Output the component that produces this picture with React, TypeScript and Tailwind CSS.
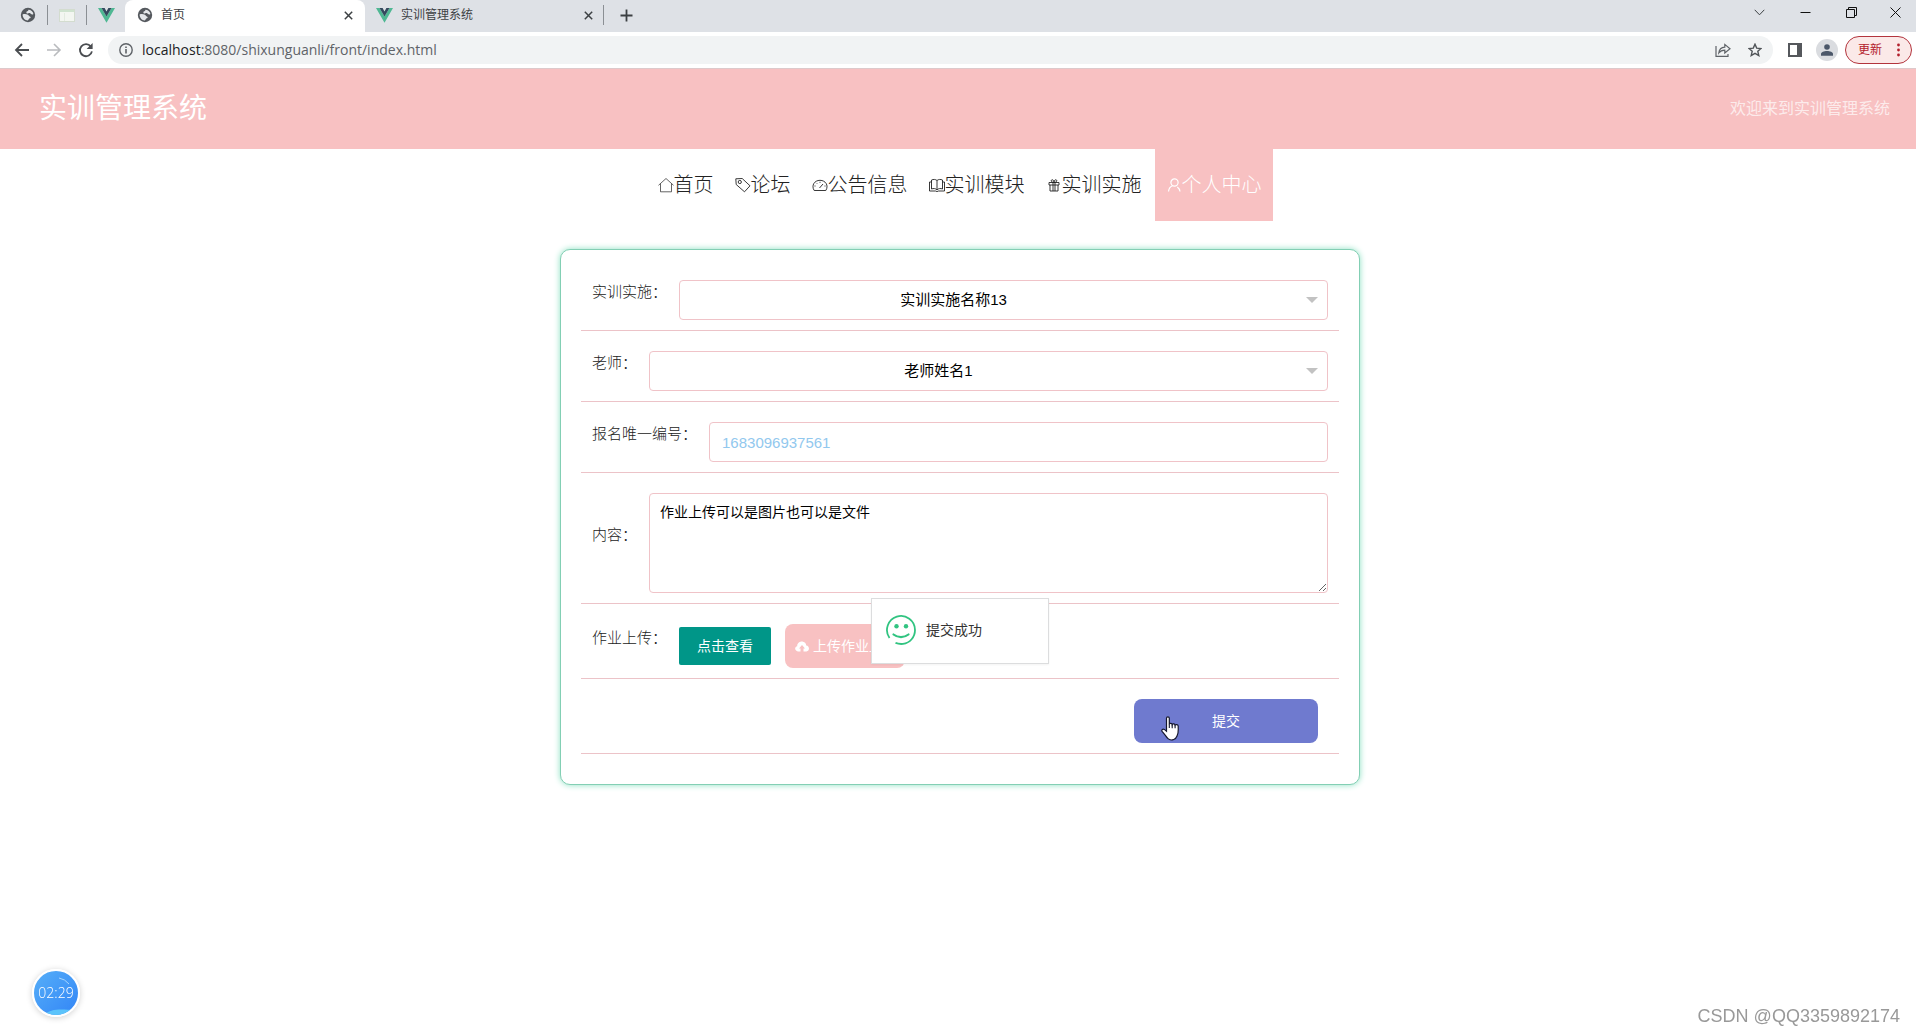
import React from "react";

const cjk = "font-['Liberation_Sans','Noto_Sans_CJK_SC',sans-serif]";

function Globe() {
  return (
    <svg width="16" height="16" viewBox="0 0 16 16" aria-hidden="true">
      <circle cx="8" cy="8" r="7.200" fill="#55595e" />
      <path d="M8.300 2.700c2.600 0 4.700 1.800 5.100 4.200-1 .9-2.400.6-3-.3-.5-.8-1.600-.5-2.300-.2-.9.4-1.900-.2-1.700-1.200.2-1 1.600-.8 1.800-1.400z" fill="#e4e7ea" />
      <path d="M2.600 7.400c1.700-.6 3.700-.5 5.300.3 1 .5 1 1.500 2 1.700 1.200.3.900 1.600-.1 1.900-.9.3-1.100 1.400-1.900 2.100-3-.1-5.300-2.800-5.300-6z" fill="#e4e7ea" />
    </svg>
  );
}

function Vue() {
  return (
    <svg width="17" height="15" viewBox="0 0 17 15" aria-hidden="true">
      <path d="M0 0h3.500l5 8.600 5-8.600H17L8.500 14.700z" fill="#4fb893" />
      <path d="M3.500 0h3.100l1.900 3.400L10.400 0h3.100l-5 8.600z" fill="#34495e" />
    </svg>
  );
}

function Cross() {
  return (
    <svg width="9" height="9" viewBox="0 0 9 9" aria-hidden="true">
      <path d="M.8.8l7.400 7.400M8.200.8L.8 8.200" stroke="#3c4043" strokeWidth="1.500" />
    </svg>
  );
}

function Divider() {
  return <span className="h-5 w-px bg-[#8b8f94]" />;
}

function TabStrip() {
  return (
    <div className="flex h-8 bg-[#dee1e6] text-xs text-[#3c4043]">
      <div className="flex h-[30px] items-center">
        <button aria-label="标签页 1" className="flex w-[47px] justify-center pl-2"><Globe /></button>
        <Divider />
        <button aria-label="标签页 2" className="flex w-[38px] justify-center">
          <svg width="16" height="13" viewBox="0 0 16 13" aria-hidden="true">
            <rect x=".5" y=".5" width="15" height="12" fill="#f3f6f1" stroke="#d3dccf" />
            <path d="M1 2h14" stroke="#cfe3cf" strokeWidth="2" />
            <path d="M5.500 4v8" stroke="#e3ebe0" />
          </svg>
        </button>
        <Divider />
        <button aria-label="标签页 3" className="flex w-[38px] justify-center"><Vue /></button>
      </div>
      <div className="flex w-[240px] items-center rounded-t-lg bg-white px-3 pb-0.5">
        <Globe />
        <span className="ml-2 flex-1">首页</span>
        <button aria-label="关闭首页"><Cross /></button>
      </div>
      <div className="flex h-[30px] flex-1 items-center">
        <div className="flex w-[238px] items-center pr-[10px] pl-[11px]">
          <Vue />
          <span className="ml-2 flex-1">实训管理系统</span>
          <button aria-label="关闭实训管理系统"><Cross /></button>
        </div>
        <Divider />
        <button aria-label="新标签页" className="ml-4">
          <svg width="13" height="13" viewBox="0 0 13 13" aria-hidden="true">
            <path d="M6.500 .5v12M.5 6.500h12" stroke="#3c4043" strokeWidth="1.800" />
          </svg>
        </button>
      </div>
      <div className="flex h-6 items-center">
        <button aria-label="搜索标签页" className="flex w-[46px] justify-center">
          <svg width="11" height="7" viewBox="0 0 11 7" aria-hidden="true"><path d="M.7.8l4.800 5 4.800-5" fill="none" stroke="#3c4043" /></svg>
        </button>
        <button aria-label="最小化" className="flex w-[46px] justify-center">
          <svg width="11" height="11" viewBox="0 0 11 11" aria-hidden="true"><path d="M.5 5.500h10" stroke="#111" /></svg>
        </button>
        <button aria-label="还原" className="flex w-[46px] justify-center">
          <svg width="11" height="11" viewBox="0 0 11 11" aria-hidden="true"><path d="M.5 2.500h8v8h-8zM2.500 2.500v-2h8v8h-2" fill="none" stroke="#111" /></svg>
        </button>
        <button aria-label="关闭窗口" className="flex w-[42px] justify-center">
          <svg width="11" height="11" viewBox="0 0 11 11" aria-hidden="true"><path d="M.5.5l10 10M10.500.5l-10 10" stroke="#111" /></svg>
        </button>
      </div>
    </div>
  );
}

function Toolbar() {
  return (
    <div className="flex h-9 items-center bg-white pr-1 pl-[14px]">
      <button aria-label="后退">
        <svg width="16" height="16" viewBox="0 0 16 16" aria-hidden="true"><path d="M15 8H2M8 2L2 8l6 6" fill="none" stroke="#4a4d51" strokeWidth="1.800" /></svg>
      </button>
      <button aria-label="前进" className="ml-4">
        <svg width="16" height="16" viewBox="0 0 16 16" aria-hidden="true"><path d="M1 8h13M8 2l6 6-6 6" fill="none" stroke="#b9bbbe" strokeWidth="1.600" /></svg>
      </button>
      <button aria-label="重新加载" className="ml-4">
        <svg width="16" height="16" viewBox="0 0 16 16" aria-hidden="true">
          <path d="M12.800 4.600A6 6 0 1 0 13.900 9.300" fill="none" stroke="#4a4d51" strokeWidth="1.800" />
          <path d="M14.600 1v6h-6z" fill="#4a4d51" />
        </svg>
      </button>
      <div className="ml-[14px] flex h-7 flex-1 items-center rounded-full bg-[#f1f3f4] px-[11px]">
        <svg width="14" height="14" viewBox="0 0 14 14" aria-hidden="true">
          <circle cx="7" cy="7" r="6.200" fill="none" stroke="#5f6368" strokeWidth="1.400" />
          <path d="M7 6v4.500M7 3.400v1.600" stroke="#5f6368" strokeWidth="1.600" />
        </svg>
        <span className="ml-[9px] flex-1 font-['Open_Sans',sans-serif] text-sm text-[#5f6368]">
          <span className="text-[#202124]">localhost</span>:8080/shixunguanli/front/index.html
        </span>
        <button aria-label="分享" className="mr-[17px]">
          <svg width="16" height="16" viewBox="0 0 16 16" aria-hidden="true">
            <path d="M1 4V14.300h12V12" fill="none" stroke="#5f6368" strokeWidth="1.200" />
            <path d="M3.800 11C4.200 7.200 6.200 5.400 9.800 5.200V2.400L15 6.700l-5.200 4.200V8.200C7.200 8.200 5.300 9 3.800 11z" fill="none" stroke="#5f6368" strokeWidth="1.200" />
          </svg>
        </button>
        <button aria-label="收藏">
          <svg width="14" height="14" viewBox="0 0 14 14" aria-hidden="true">
            <path d="M7 1.200l1.700 3.900 4.300.4-3.200 2.800 1 4.200L7 10.300l-3.800 2.200 1-4.200L1 5.500l4.300-.4z" fill="none" stroke="#505458" strokeWidth="1.400" />
          </svg>
        </button>
      </div>
      <button aria-label="侧边栏" className="ml-[15px]">
        <svg width="14" height="14" viewBox="0 0 14 14" aria-hidden="true">
          <path d="M1 1h12v12H1z" fill="none" stroke="#55585c" strokeWidth="2" />
          <path d="M9 1h4v12H9z" fill="#55585c" />
        </svg>
      </button>
      <button aria-label="用户" className="ml-[14px] flex size-[22px] items-center justify-center rounded-full bg-[#dadce0]">
        <svg width="12" height="12" viewBox="0 0 12 12" aria-hidden="true">
          <circle cx="6" cy="3" r="2.800" fill="#4b5769" />
          <path d="M0 11.800V10c0-2 3-3 6-3s6 1 6 3v1.800z" fill="#4b5769" />
        </svg>
      </button>
      <button className="ml-[7px] flex h-7 w-[67px] items-center justify-between rounded-full border border-[#b3343d] bg-[#fbe9e8] pr-[11px] pl-3 text-xs text-[#b3202c]">
        更新
        <svg width="3" height="14" viewBox="0 0 3 14" aria-hidden="true">
          <circle cx="1.500" cy="2" r="1.400" fill="#b3202c" /><circle cx="1.500" cy="7" r="1.400" fill="#b3202c" /><circle cx="1.500" cy="12" r="1.400" fill="#b3202c" />
        </svg>
      </button>
    </div>
  );
}

const icons: Record<string, React.ReactNode> = {
  home: <path d="M.5 8.300L8 1.500l7.500 6.800M2.500 6.800v8h11v-8" strokeWidth="0.700" />,
  tag: (
    <>
      <path d="M.8 1.800l6.400-.3 7.800 7.300-5.500 6L1.200 7.500z" />
      <circle cx="4.800" cy="5" r="1.600" />
    </>
  ),
  gauge: <path d="M2.200 13.500C-1 8.500 2.500 3.300 8 3.300s9 5.200 5.800 10.200zM7.500 11l3.500-4M2.500 9h1M8 4.800v1M4.500 6l.6.600M13.500 9h-1" />,
  book: <path d="M8 3.500C6.500 2.200 4.500 2.200 2.500 3v9c2-.8 4-.6 5.500.8 1.500-1.400 3.500-1.600 5.500-.8V3c-2-.8-4-.8-5.500.5v9.300M2.500 5h-2v9h6l1.500.6 1.500-.6h6V5h-2" />,
  gift: <path d="M3 5.500h10v2.500H3zM4 8v6h8V8M7 5.500V14M9 5.500V14M8 5.500C6 5.500 4.500 4 5.500 3S8 3.500 8 5.500c0-2 1.500-3.500 2.500-2.500S10 5.500 8 5.500" />,
  user: (
    <>
      <circle cx="8.500" cy="5.500" r="3.600" strokeWidth="1.200" />
      <path d="M2.500 14.500c.3-3.200 2-5 4-5.800M14 14.500c-.3-2-1.200-3.500-2.700-4.500" strokeWidth="1.200" />
    </>
  ),
};

const navItems = [
  { label: "首页", icon: "home", active: false },
  { label: "论坛", icon: "tag", active: false },
  { label: "公告信息", icon: "gauge", active: false },
  { label: "实训模块", icon: "book", active: false },
  { label: "实训实施", icon: "gift", active: false },
  { label: "个人中心", icon: "user", active: true },
];

function Nav() {
  return (
    <nav className="flex justify-center gap-px pl-1">
      {navItems.map((item) => (
        <a
          key={item.label}
          href="#"
          className={
            item.active
              ? "ml-0.5 flex h-[72px] items-center bg-[#f8c1c2] px-[11px] text-xl font-light text-white"
              : "flex h-[72px] items-center px-[10px] text-xl font-light text-[#222]"
          }
        >
          <svg width="16" height="16" viewBox="0 0 16 16" fill="none" stroke="currentColor" strokeWidth="0.900" aria-hidden="true">
            {icons[item.icon]}
          </svg>
          {item.label}
        </a>
      ))}
    </nav>
  );
}

function Row({ label, id, labelClass = "", children }: { label?: string; id?: string; labelClass?: string; children: React.ReactNode }) {
  return (
    <div className="mb-[10px] flex items-start border-b border-[#ecc3c8] px-[11px] py-[10px]">
      {label && (
        <label htmlFor={id} className={"mr-3 shrink-0 text-[15px] leading-6 font-light text-[#222] " + labelClass}>
          {label}
        </label>
      )}
      {children}
    </div>
  );
}

function Select({ id, value }: { id: string; value: string }) {
  return (
    <div className="relative min-w-0 flex-1">
      <select id={id} className="h-10 w-full appearance-none rounded border border-[#f0c3c8] bg-white pr-[100px] text-center text-[15px] text-black [text-align-last:center]">
        <option>{value}</option>
      </select>
      <svg className="pointer-events-none absolute top-[17px] right-[10px]" width="12" height="6" viewBox="0 0 12 6" aria-hidden="true">
        <path d="M0 0h12L6 6z" fill="#c2c2c2" />
      </svg>
    </div>
  );
}

function Toast() {
  return (
    <div role="status" className="absolute top-[348px] left-1/2 flex h-[66px] w-[178px] -translate-x-1/2 items-center border border-[#dcddde] bg-white pb-0.5 pl-[14px] text-sm text-[#333] shadow-xs">
      <svg width="30" height="30" viewBox="0 0 30 30" fill="none" stroke="#31c481" aria-hidden="true">
        <path d="M3.500 23A14 14 0 1 1 29 15c0 7-5 13-12 13.900-3 .3-5 0-7.500-1" strokeWidth="1.800" />
        <path d="M7.500 19.500c4.500 3.500 10.500 3.500 15 0" strokeWidth="2.200" strokeLinecap="round" />
        <circle cx="10.500" cy="11.300" r="2.200" fill="#31c481" stroke="none" />
        <circle cx="20" cy="11.300" r="2.200" fill="#31c481" stroke="none" />
      </svg>
      <span className="ml-[10px]">提交成功</span>
    </div>
  );
}

function HandPointer() {
  return (
    <svg className="pointer-events-none absolute top-[17px] left-[27px]" width="19" height="25" viewBox="0 0 19 25" aria-hidden="true">
      <path
        d="M5.500 2.200C5.500.4 8.300.4 8.300 2.200v6c.3-1.200 2.700-1.100 2.900.3.500-1 2.700-.8 2.900.6.700-.9 3.100-.6 3.100 1.200 0 3.800.5 6.200-1 9.200-.8 2-.8 3-3.400 4-2.200.8-4.500.5-5.800-.8C5.300 21 3.800 18.300 1.300 15.600c-1.300-1.500.3-3.200 2-2.200l2.200 1.900z"
        fill="#fff"
        stroke="#15172e"
        strokeWidth="1.200"
      />
      <path d="M8.300 8v4M11.200 8.600v3.600M14.100 9.300v3" stroke="#15172e" strokeWidth="1.100" />
    </svg>
  );
}

function HomeworkForm() {
  return (
    <form
      onSubmit={(e) => e.preventDefault()}
      className="relative w-[800px] rounded-[10px] border border-[#83cfb4] bg-white p-5 shadow-[0_0_6px_#8be0c2]"
    >
      <Row label="实训实施：" id="practice"><Select id="practice" value="实训实施名称13" /></Row>
      <Row label="老师：" id="teacher"><Select id="teacher" value="老师姓名1" /></Row>
      <Row label="报名唯一编号：" id="code">
        <input id="code" defaultValue="1683096937561" className="h-10 min-w-0 flex-1 rounded border border-[#f0c3c8] px-3 text-[15px] text-[#92c8ee]" />
      </Row>
      <Row label="内容：" id="content" labelClass="mt-[30px]">
        <textarea id="content" defaultValue="作业上传可以是图片也可以是文件" className="h-[100px] min-w-0 flex-1 rounded border border-[#f0c3c8] px-[10px] py-2 text-sm text-black" />
      </Row>
      <Row label="作业上传：" id="upload" labelClass="mt-0.5">
        <div className="flex items-center gap-[14px]">
          <button type="button" className="h-[38px] w-[92px] rounded-xs bg-[#009688] text-sm text-white">点击查看</button>
          <button type="button" id="upload" className="flex h-11 w-[120px] items-center gap-1 rounded-lg bg-[#f8c1c2] pl-[10px] text-sm whitespace-nowrap text-white">
            <svg width="14" height="11" viewBox="0 0 14 11" className="shrink-0" aria-hidden="true">
              <path d="M3 10.500C-.5 10-.8 5.800 2.200 5.200 2 1.500 6 .2 8 .7c2 .4 3.200 2 3.200 3.700 3.500.3 3.700 5.400.3 6.100H8.500V7.500H10L7 4 4 7.500h1.500v3z" fill="#fff" />
            </svg>
            上传作业上传
          </button>
        </div>
      </Row>
      <Row>
        <div className="relative mr-[10px] ml-auto">
          <button type="submit" className="h-11 w-[184px] rounded-lg bg-[#6f7acf] text-sm text-white">提交</button>
          <HandPointer />
        </div>
      </Row>
      <Toast />
    </form>
  );
}

function Timer() {
  return (
    <div className="fixed bottom-[17px] left-8 flex size-12 items-center justify-center overflow-hidden rounded-full border-2 border-white bg-linear-to-br from-[#56aef8] to-[#3385f6] font-['Open_Sans',sans-serif] text-sm font-light text-white shadow-[0_1px_6px_#00000030]">
      <svg className="absolute inset-0" width="44" height="44" viewBox="0 0 44 44" aria-hidden="true">
        <path d="M10 44c6-6 14-6 30-5v5z" fill="#5cc4fb" />
        <path d="M25 7q6 1 10 6" fill="none" stroke="#a8d6fc" />
      </svg>
      <span className="relative">02:29</span>
    </div>
  );
}

export default function App() {
  return (
    <div className={"min-h-screen bg-white " + cjk}>
      <TabStrip />
      <Toolbar />
      <header className="flex h-[81px] items-center justify-between border-t border-[#ddc9cb] bg-[#f8c1c2] pr-[26px] pl-[39px] text-white">
        <h1 className="text-[28px]">实训管理系统</h1>
        <span className="text-base text-white/70">欢迎来到实训管理系统</span>
      </header>
      <Nav />
      <main className="mt-7 flex justify-center pl-1">
        <HomeworkForm />
      </main>
      <Timer />
      <div className="fixed right-4 bottom-1.5 text-lg leading-6 text-[#999]">CSDN @QQ3359892174</div>
    </div>
  );
}
